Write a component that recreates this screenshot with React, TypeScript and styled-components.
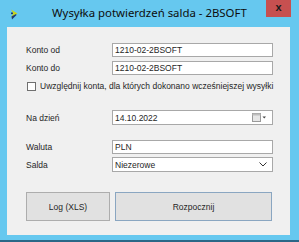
import styled, { createGlobalStyle } from 'styled-components'

const GlobalStyle = createGlobalStyle`
  html, body {
    margin: 0;
    padding: 0;
    background: #ffffff;
  }
`

const FORM_FONT = `'Liberation Sans', Arial, sans-serif`

const AppIcon = () => (
  <svg width="9" height="11" viewBox="0 0 9 11">
    <path d="M1 0.5 L7.5 4.5 L1 8.5 L3.2 4.5 Z" fill="#c9d41a" />
    <path d="M1.5 7.5 L6 5 L6.5 6 L2 10.5 Z" fill="#1d3b78" />
    <rect x="1" y="3.5" width="2" height="1.6" fill="#1d3b78" />
  </svg>
)

const DateIcon = () => (
  <svg width="15" height="9" viewBox="0 0 15 9">
    <rect x="0.5" y="0.5" width="8" height="8" fill="#e6e6e6" stroke="#9a9a9a" />
    <rect x="0.5" y="0.5" width="8" height="2" fill="#bdbdbd" />
    <path d="M10.5 3.5 L14 3.5 L12.25 5.5 Z" fill="#444" />
  </svg>
)

const Chevron = () => (
  <svg width="8" height="5" viewBox="0 0 8 5">
    <path d="M0.5 0.5 L4 4 L7.5 0.5" fill="none" stroke="#333" strokeWidth="1" />
  </svg>
)

const App = () => {
  return (
    <>
      <GlobalStyle />
      <Window>
        <TitleBar>
          <IconSlot>
            <AppIcon />
          </IconSlot>
          <Title>Wysyłka potwierdzeń salda - 2BSOFT</Title>
          <CloseButton>x</CloseButton>
        </TitleBar>
        <Client>
          <Row $top={16}>
            <Label>Konto od</Label>
            <TextBox>1210-02-2BSOFT</TextBox>
          </Row>
          <Row $top={4}>
            <Label>Konto do</Label>
            <TextBox>1210-02-2BSOFT</TextBox>
          </Row>
          <CheckRow>
            <CheckBox />
            <CheckText>Uwzględnij konta, dla których dokonano wcześniejszej wysyłki</CheckText>
          </CheckRow>
          <Row $top={19}>
            <Label>Na dzień</Label>
            <TextBox $tall>
              <span>14.10.2022</span>
              <DateIcon />
            </TextBox>
          </Row>
          <Row $top={15}>
            <Label>Waluta</Label>
            <TextBox>PLN</TextBox>
          </Row>
          <Row $top={3}>
            <Label>Salda</Label>
            <TextBox $tall>
              <span>Niezerowe</span>
              <Chevron />
            </TextBox>
          </Row>
          <Buttons>
            <Button $width={84}>Log (XLS)</Button>
            <Button $width={157} $primary>
              Rozpocznij
            </Button>
          </Buttons>
        </Client>
      </Window>
    </>
  )
}

const Window = styled.div`
  width: 299px;
  height: 242px;
  box-sizing: border-box;
  background: #66c8ef;
  border-bottom: 2px solid #2b6787;
  padding: 0 9px 5px 7px;
  display: flex;
  flex-direction: column;
`

const TitleBar = styled.div`
  height: 27px;
  display: flex;
  align-items: flex-start;
`

const IconSlot = styled.div`
  width: 9px;
  height: 11px;
  margin: 6px 0 0 3px;
`

const Title = styled.div`
  flex: 1;
  margin: 5px 0 0 33px;
  font-family: 'Noto Sans', 'Open Sans', sans-serif;
  font-size: 11.4px;
  line-height: 15px;
  color: #0d0d0d;
  white-space: nowrap;
`

const CloseButton = styled.div`
  width: 25px;
  height: 17px;
  margin-right: -1px;
  background: #c75050;
  color: #1a1a1a;
  font-family: ${FORM_FONT};
  font-weight: bold;
  font-size: 11px;
  line-height: 15px;
  text-align: center;
`

const Client = styled.div`
  flex: 1;
  background: #f0f0f0;
  padding-left: 19px;
  display: flex;
  flex-direction: column;
  font-family: ${FORM_FONT};
  font-size: 8.5px;
  color: #262626;
`

const Row = styled.div<{ $top: number }>`
  display: flex;
  align-items: center;
  margin-top: ${({ $top }) => $top}px;
`

const Label = styled.div`
  width: 86px;
`

const TextBox = styled.div<{ $tall?: boolean }>`
  width: 161px;
  height: ${({ $tall }) => ($tall ? 15 : 14)}px;
  box-sizing: border-box;
  background: #ffffff;
  border: 1px solid #a8a8a8;
  padding: 0 5px 0 2px;
  display: flex;
  align-items: center;
  justify-content: space-between;
`

const CheckRow = styled.div`
  display: flex;
  align-items: center;
  margin-top: 6px;
  margin-left: 1px;
`

const CheckBox = styled.div`
  width: 9px;
  height: 9px;
  box-sizing: border-box;
  border: 1px solid #707070;
  background: #ffffff;
  margin-right: 4px;
`

const CheckText = styled.div`
  white-space: nowrap;
`

const Buttons = styled.div`
  display: flex;
  gap: 5px;
  margin-top: 20px;
`

const Button = styled.div<{ $width: number; $primary?: boolean }>`
  width: ${({ $width }) => $width}px;
  height: 29px;
  box-sizing: border-box;
  background: #e1e1e1;
  border: 1px solid ${({ $primary }) => ($primary ? '#8aa6c1' : '#adadad')};
  display: flex;
  align-items: center;
  justify-content: center;
`

export default App
